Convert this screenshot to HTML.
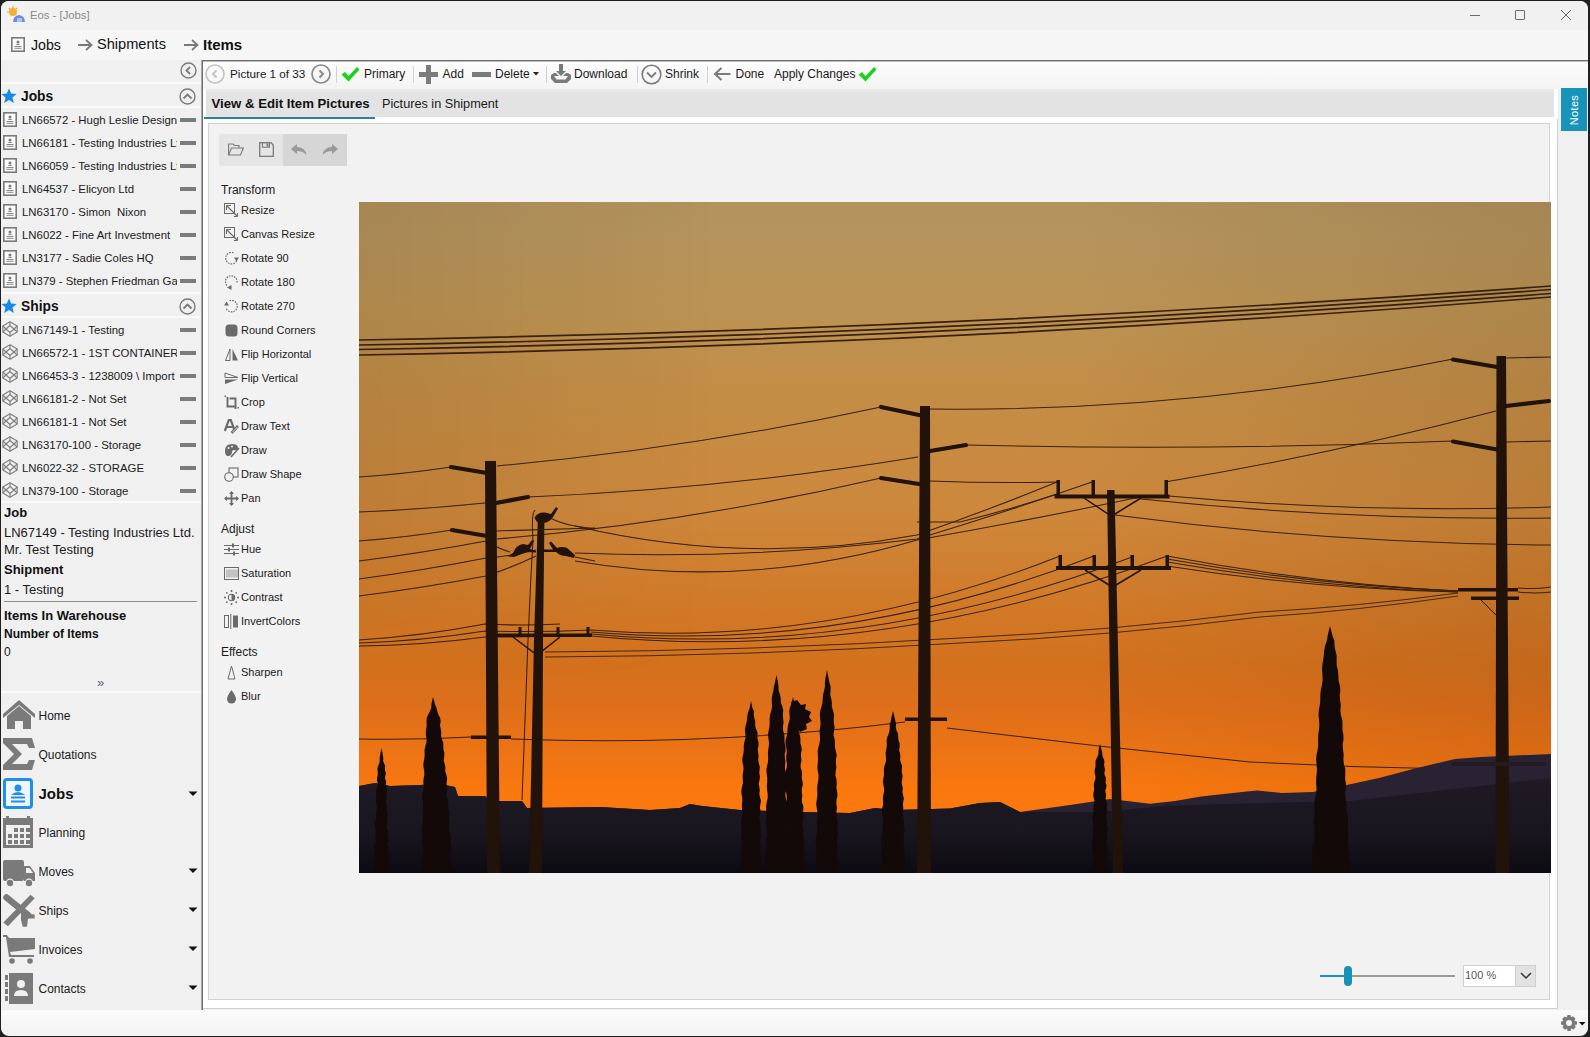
<!DOCTYPE html>
<html><head><meta charset="utf-8">
<style>
*{margin:0;padding:0;box-sizing:border-box}
html,body{width:1590px;height:1037px;overflow:hidden;background:#202020;font-family:"Liberation Sans",sans-serif;color:#111}
.a{position:absolute}
.t{position:absolute;white-space:nowrap;line-height:1}
svg{position:absolute;overflow:visible}
</style></head><body>
<div class="a" style="left:1px;top:1px;width:1587px;height:1035px;background:#f0f0f0;border-radius:8px;overflow:hidden"></div>

<div class="a" style="left:1px;top:1px;width:1587px;height:29px;background:#f1f1f1;border-radius:8px 8px 0 0"></div>
<svg style="left:7px;top:6px" width="20" height="18" viewBox="0 0 20 18">
<circle cx="6" cy="6" r="4" fill="#f0b030"/><g stroke="#f0a020" stroke-width="1.2"><line x1="6" y1="0" x2="6" y2="2"/><line x1="0" y1="6" x2="2" y2="6"/><line x1="1.8" y1="1.8" x2="3" y2="3"/><line x1="10.2" y1="1.8" x2="9" y2="3"/></g>
<path d="M6 16 Q6 10 12 9 Q18 10 18 16 Z" fill="#6d8fd0"/><rect x="10" y="12" width="5" height="4" fill="#a9c4f0"/>
</svg>
<div class="t" style="left:30px;top:9.57px;font-size:11.3px;font-weight:normal;color:#8a8a8a;">Eos - [Jobs]</div>
<div class="a" style="left:1470px;top:15px;width:10px;height:1px;background:#6a6a6a"></div>
<div class="a" style="left:1515px;top:10px;width:10px;height:10px;border:1px solid #6a6a6a;border-radius:1px"></div>
<svg style="left:1561px;top:10px" width="10" height="10" viewBox="0 0 10 10"><path d="M0 0 L10 10 M10 0 L0 10" stroke="#6a6a6a" stroke-width="1"/></svg>
<div class="a" style="left:1px;top:30px;width:1587px;height:30px;background:#f6f6f6"></div>
<svg style="left:11px;top:37px" width="14" height="15" viewBox="0 0 14 15">
<rect x="0.8" y="0.8" width="12.4" height="13.4" fill="#fbfbfb" stroke="#7a7a7a" stroke-width="1.6"/>
<circle cx="7" cy="5" r="1.5" fill="#7a7a7a"/><path d="M4.5 8 Q7 5.8 9.5 8 Z" fill="#7a7a7a"/>
<line x1="3.5" y1="9.5" x2="10.5" y2="9.5" stroke="#7a7a7a" stroke-width="0.9"/><line x1="3.5" y1="11.3" x2="10.5" y2="11.3" stroke="#7a7a7a" stroke-width="0.9"/>
</svg>
<div class="t" style="left:31px;top:37.75px;font-size:14.2px;font-weight:normal;color:#111;">Jobs</div>
<svg style="left:78px;top:39px" width="15" height="12" viewBox="0 0 15 12"><path d="M0 6 H13 M8 1 L13.5 6 L8 11" fill="none" stroke="#7a7a7a" stroke-width="1.8"/></svg>
<div class="t" style="left:97px;top:37.39px;font-size:14.6px;font-weight:normal;color:#111;">Shipments</div>
<svg style="left:184px;top:39px" width="15" height="12" viewBox="0 0 15 12"><path d="M0 6 H13 M8 1 L13.5 6 L8 11" fill="none" stroke="#7a7a7a" stroke-width="1.8"/></svg>
<div class="t" style="left:203px;top:37.02px;font-size:15px;font-weight:bold;color:#111;">Items</div>
<div class="a" style="left:1px;top:60px;width:200px;height:950px;background:#f0f0f0"></div>
<svg style="left:179.0px;top:60.5px" width="19.0" height="19.0"><circle cx="9.5" cy="9.5" r="7.5" fill="none" stroke="#7a7a7a" stroke-width="1.4"/><path d="M11.0 6.0 L7.5 9.5 L11.0 13.0" fill="none" stroke="#7a7a7a" stroke-width="1.7999999999999998"/></svg>
<div class="a" style="left:1px;top:82px;width:200px;height:2px;background:#fafafa"></div>
<div class="a" style="left:1px;top:106px;width:200px;height:2px;background:#fafafa"></div>
<svg style="left:1px;top:88px" width="16" height="16" viewBox="0 0 16 16"><path d="M8 0.5 L10.2 5.6 L15.6 6 L11.5 9.6 L12.8 15 L8 12.1 L3.2 15 L4.5 9.6 L0.4 6 L5.8 5.6 Z" fill="#1a88e6"/></svg>
<div class="t" style="left:21px;top:90.01px;font-size:13.8px;font-weight:bold;color:#111;">Jobs</div>
<svg style="left:178.0px;top:86.5px" width="19.0" height="19.0"><circle cx="9.5" cy="9.5" r="7.5" fill="none" stroke="#7a7a7a" stroke-width="1.4"/><path d="M5.5 11.5 L9.5 7.5 L13.5 11.5" fill="none" stroke="#7a7a7a" stroke-width="1.7999999999999998"/></svg>
<svg style="left:3px;top:112px" width="14" height="15" viewBox="0 0 14 15">
<rect x="0.8" y="0.8" width="12.4" height="13.4" fill="#fbfbfb" stroke="#7a7a7a" stroke-width="1.6"/>
<circle cx="7" cy="5" r="1.5" fill="#7a7a7a"/><path d="M4.5 8 Q7 5.8 9.5 8 Z" fill="#7a7a7a"/>
<line x1="3.5" y1="9.5" x2="10.5" y2="9.5" stroke="#7a7a7a" stroke-width="0.9"/><line x1="3.5" y1="11.3" x2="10.5" y2="11.3" stroke="#7a7a7a" stroke-width="0.9"/>
</svg>
<div class="t" style="left:22px;top:114.68px;width:155px;overflow:hidden;font-size:11.4px;color:#1a1a1a">LN66572 - Hugh Leslie Design</div>
<div class="a" style="left:180px;top:118px;width:16px;height:4px;background:#7b7b7b"></div>
<svg style="left:3px;top:135px" width="14" height="15" viewBox="0 0 14 15">
<rect x="0.8" y="0.8" width="12.4" height="13.4" fill="#fbfbfb" stroke="#7a7a7a" stroke-width="1.6"/>
<circle cx="7" cy="5" r="1.5" fill="#7a7a7a"/><path d="M4.5 8 Q7 5.8 9.5 8 Z" fill="#7a7a7a"/>
<line x1="3.5" y1="9.5" x2="10.5" y2="9.5" stroke="#7a7a7a" stroke-width="0.9"/><line x1="3.5" y1="11.3" x2="10.5" y2="11.3" stroke="#7a7a7a" stroke-width="0.9"/>
</svg>
<div class="t" style="left:22px;top:137.68px;width:155px;overflow:hidden;font-size:11.4px;color:#1a1a1a">LN66181 - Testing Industries Ltd</div>
<div class="a" style="left:180px;top:141px;width:16px;height:4px;background:#7b7b7b"></div>
<svg style="left:3px;top:158px" width="14" height="15" viewBox="0 0 14 15">
<rect x="0.8" y="0.8" width="12.4" height="13.4" fill="#fbfbfb" stroke="#7a7a7a" stroke-width="1.6"/>
<circle cx="7" cy="5" r="1.5" fill="#7a7a7a"/><path d="M4.5 8 Q7 5.8 9.5 8 Z" fill="#7a7a7a"/>
<line x1="3.5" y1="9.5" x2="10.5" y2="9.5" stroke="#7a7a7a" stroke-width="0.9"/><line x1="3.5" y1="11.3" x2="10.5" y2="11.3" stroke="#7a7a7a" stroke-width="0.9"/>
</svg>
<div class="t" style="left:22px;top:160.68px;width:155px;overflow:hidden;font-size:11.4px;color:#1a1a1a">LN66059 - Testing Industries Ltd</div>
<div class="a" style="left:180px;top:164px;width:16px;height:4px;background:#7b7b7b"></div>
<svg style="left:3px;top:181px" width="14" height="15" viewBox="0 0 14 15">
<rect x="0.8" y="0.8" width="12.4" height="13.4" fill="#fbfbfb" stroke="#7a7a7a" stroke-width="1.6"/>
<circle cx="7" cy="5" r="1.5" fill="#7a7a7a"/><path d="M4.5 8 Q7 5.8 9.5 8 Z" fill="#7a7a7a"/>
<line x1="3.5" y1="9.5" x2="10.5" y2="9.5" stroke="#7a7a7a" stroke-width="0.9"/><line x1="3.5" y1="11.3" x2="10.5" y2="11.3" stroke="#7a7a7a" stroke-width="0.9"/>
</svg>
<div class="t" style="left:22px;top:183.68px;width:155px;overflow:hidden;font-size:11.4px;color:#1a1a1a">LN64537 - Elicyon Ltd</div>
<div class="a" style="left:180px;top:187px;width:16px;height:4px;background:#7b7b7b"></div>
<svg style="left:3px;top:204px" width="14" height="15" viewBox="0 0 14 15">
<rect x="0.8" y="0.8" width="12.4" height="13.4" fill="#fbfbfb" stroke="#7a7a7a" stroke-width="1.6"/>
<circle cx="7" cy="5" r="1.5" fill="#7a7a7a"/><path d="M4.5 8 Q7 5.8 9.5 8 Z" fill="#7a7a7a"/>
<line x1="3.5" y1="9.5" x2="10.5" y2="9.5" stroke="#7a7a7a" stroke-width="0.9"/><line x1="3.5" y1="11.3" x2="10.5" y2="11.3" stroke="#7a7a7a" stroke-width="0.9"/>
</svg>
<div class="t" style="left:22px;top:206.68px;width:155px;overflow:hidden;font-size:11.4px;color:#1a1a1a">LN63170 - Simon&nbsp; Nixon</div>
<div class="a" style="left:180px;top:210px;width:16px;height:4px;background:#7b7b7b"></div>
<svg style="left:3px;top:227px" width="14" height="15" viewBox="0 0 14 15">
<rect x="0.8" y="0.8" width="12.4" height="13.4" fill="#fbfbfb" stroke="#7a7a7a" stroke-width="1.6"/>
<circle cx="7" cy="5" r="1.5" fill="#7a7a7a"/><path d="M4.5 8 Q7 5.8 9.5 8 Z" fill="#7a7a7a"/>
<line x1="3.5" y1="9.5" x2="10.5" y2="9.5" stroke="#7a7a7a" stroke-width="0.9"/><line x1="3.5" y1="11.3" x2="10.5" y2="11.3" stroke="#7a7a7a" stroke-width="0.9"/>
</svg>
<div class="t" style="left:22px;top:229.68px;width:155px;overflow:hidden;font-size:11.4px;color:#1a1a1a">LN6022 - Fine Art Investment</div>
<div class="a" style="left:180px;top:233px;width:16px;height:4px;background:#7b7b7b"></div>
<svg style="left:3px;top:250px" width="14" height="15" viewBox="0 0 14 15">
<rect x="0.8" y="0.8" width="12.4" height="13.4" fill="#fbfbfb" stroke="#7a7a7a" stroke-width="1.6"/>
<circle cx="7" cy="5" r="1.5" fill="#7a7a7a"/><path d="M4.5 8 Q7 5.8 9.5 8 Z" fill="#7a7a7a"/>
<line x1="3.5" y1="9.5" x2="10.5" y2="9.5" stroke="#7a7a7a" stroke-width="0.9"/><line x1="3.5" y1="11.3" x2="10.5" y2="11.3" stroke="#7a7a7a" stroke-width="0.9"/>
</svg>
<div class="t" style="left:22px;top:252.68px;width:155px;overflow:hidden;font-size:11.4px;color:#1a1a1a">LN3177 - Sadie Coles HQ</div>
<div class="a" style="left:180px;top:256px;width:16px;height:4px;background:#7b7b7b"></div>
<svg style="left:3px;top:273px" width="14" height="15" viewBox="0 0 14 15">
<rect x="0.8" y="0.8" width="12.4" height="13.4" fill="#fbfbfb" stroke="#7a7a7a" stroke-width="1.6"/>
<circle cx="7" cy="5" r="1.5" fill="#7a7a7a"/><path d="M4.5 8 Q7 5.8 9.5 8 Z" fill="#7a7a7a"/>
<line x1="3.5" y1="9.5" x2="10.5" y2="9.5" stroke="#7a7a7a" stroke-width="0.9"/><line x1="3.5" y1="11.3" x2="10.5" y2="11.3" stroke="#7a7a7a" stroke-width="0.9"/>
</svg>
<div class="t" style="left:22px;top:275.68px;width:155px;overflow:hidden;font-size:11.4px;color:#1a1a1a">LN379 - Stephen Friedman Gallery</div>
<div class="a" style="left:180px;top:279px;width:16px;height:4px;background:#7b7b7b"></div>
<div class="a" style="left:1px;top:292px;width:200px;height:2px;background:#fafafa"></div>
<div class="a" style="left:1px;top:316px;width:200px;height:2px;background:#fafafa"></div>
<svg style="left:1px;top:298px" width="16" height="16" viewBox="0 0 16 16"><path d="M8 0.5 L10.2 5.6 L15.6 6 L11.5 9.6 L12.8 15 L8 12.1 L3.2 15 L4.5 9.6 L0.4 6 L5.8 5.6 Z" fill="#1a88e6"/></svg>
<div class="t" style="left:21px;top:300.01px;font-size:13.8px;font-weight:bold;color:#111;">Ships</div>
<svg style="left:178.0px;top:296.5px" width="19.0" height="19.0"><circle cx="9.5" cy="9.5" r="7.5" fill="none" stroke="#7a7a7a" stroke-width="1.4"/><path d="M5.5 11.5 L9.5 7.5 L13.5 11.5" fill="none" stroke="#7a7a7a" stroke-width="1.7999999999999998"/></svg>
<svg style="left:2px;top:321px" width="16" height="16" viewBox="0 0 16 16"><g fill="none" stroke="#7d7d7d" stroke-width="1.1" stroke-linejoin="round"><path d="M8 0.8 L15.2 5 L15.2 11 L8 15.2 L0.8 11 L0.8 5 Z"/><path d="M8 4.5 L12 8 L8 11.5 L4 8 Z"/><path d="M8 0.8 V4.5 M8 11.5 V15.2 M0.8 5 L4 8 L0.8 11 M15.2 5 L12 8 L15.2 11"/></g></svg>
<div class="t" style="left:22px;top:324.68px;width:155px;overflow:hidden;font-size:11.4px;color:#1a1a1a">LN67149-1 - Testing</div>
<div class="a" style="left:180px;top:328px;width:16px;height:4px;background:#7b7b7b"></div>
<svg style="left:2px;top:344px" width="16" height="16" viewBox="0 0 16 16"><g fill="none" stroke="#7d7d7d" stroke-width="1.1" stroke-linejoin="round"><path d="M8 0.8 L15.2 5 L15.2 11 L8 15.2 L0.8 11 L0.8 5 Z"/><path d="M8 4.5 L12 8 L8 11.5 L4 8 Z"/><path d="M8 0.8 V4.5 M8 11.5 V15.2 M0.8 5 L4 8 L0.8 11 M15.2 5 L12 8 L15.2 11"/></g></svg>
<div class="t" style="left:22px;top:347.68px;width:155px;overflow:hidden;font-size:11.4px;color:#1a1a1a">LN66572-1 - 1ST CONTAINER</div>
<div class="a" style="left:180px;top:351px;width:16px;height:4px;background:#7b7b7b"></div>
<svg style="left:2px;top:367px" width="16" height="16" viewBox="0 0 16 16"><g fill="none" stroke="#7d7d7d" stroke-width="1.1" stroke-linejoin="round"><path d="M8 0.8 L15.2 5 L15.2 11 L8 15.2 L0.8 11 L0.8 5 Z"/><path d="M8 4.5 L12 8 L8 11.5 L4 8 Z"/><path d="M8 0.8 V4.5 M8 11.5 V15.2 M0.8 5 L4 8 L0.8 11 M15.2 5 L12 8 L15.2 11"/></g></svg>
<div class="t" style="left:22px;top:370.68px;width:155px;overflow:hidden;font-size:11.4px;color:#1a1a1a">LN66453-3 - 1238009 \ Import</div>
<div class="a" style="left:180px;top:374px;width:16px;height:4px;background:#7b7b7b"></div>
<svg style="left:2px;top:390px" width="16" height="16" viewBox="0 0 16 16"><g fill="none" stroke="#7d7d7d" stroke-width="1.1" stroke-linejoin="round"><path d="M8 0.8 L15.2 5 L15.2 11 L8 15.2 L0.8 11 L0.8 5 Z"/><path d="M8 4.5 L12 8 L8 11.5 L4 8 Z"/><path d="M8 0.8 V4.5 M8 11.5 V15.2 M0.8 5 L4 8 L0.8 11 M15.2 5 L12 8 L15.2 11"/></g></svg>
<div class="t" style="left:22px;top:393.68px;width:155px;overflow:hidden;font-size:11.4px;color:#1a1a1a">LN66181-2 - Not Set</div>
<div class="a" style="left:180px;top:397px;width:16px;height:4px;background:#7b7b7b"></div>
<svg style="left:2px;top:413px" width="16" height="16" viewBox="0 0 16 16"><g fill="none" stroke="#7d7d7d" stroke-width="1.1" stroke-linejoin="round"><path d="M8 0.8 L15.2 5 L15.2 11 L8 15.2 L0.8 11 L0.8 5 Z"/><path d="M8 4.5 L12 8 L8 11.5 L4 8 Z"/><path d="M8 0.8 V4.5 M8 11.5 V15.2 M0.8 5 L4 8 L0.8 11 M15.2 5 L12 8 L15.2 11"/></g></svg>
<div class="t" style="left:22px;top:416.68px;width:155px;overflow:hidden;font-size:11.4px;color:#1a1a1a">LN66181-1 - Not Set</div>
<div class="a" style="left:180px;top:420px;width:16px;height:4px;background:#7b7b7b"></div>
<svg style="left:2px;top:436px" width="16" height="16" viewBox="0 0 16 16"><g fill="none" stroke="#7d7d7d" stroke-width="1.1" stroke-linejoin="round"><path d="M8 0.8 L15.2 5 L15.2 11 L8 15.2 L0.8 11 L0.8 5 Z"/><path d="M8 4.5 L12 8 L8 11.5 L4 8 Z"/><path d="M8 0.8 V4.5 M8 11.5 V15.2 M0.8 5 L4 8 L0.8 11 M15.2 5 L12 8 L15.2 11"/></g></svg>
<div class="t" style="left:22px;top:439.68px;width:155px;overflow:hidden;font-size:11.4px;color:#1a1a1a">LN63170-100 - Storage</div>
<div class="a" style="left:180px;top:443px;width:16px;height:4px;background:#7b7b7b"></div>
<svg style="left:2px;top:459px" width="16" height="16" viewBox="0 0 16 16"><g fill="none" stroke="#7d7d7d" stroke-width="1.1" stroke-linejoin="round"><path d="M8 0.8 L15.2 5 L15.2 11 L8 15.2 L0.8 11 L0.8 5 Z"/><path d="M8 4.5 L12 8 L8 11.5 L4 8 Z"/><path d="M8 0.8 V4.5 M8 11.5 V15.2 M0.8 5 L4 8 L0.8 11 M15.2 5 L12 8 L15.2 11"/></g></svg>
<div class="t" style="left:22px;top:462.68px;width:155px;overflow:hidden;font-size:11.4px;color:#1a1a1a">LN6022-32 - STORAGE</div>
<div class="a" style="left:180px;top:466px;width:16px;height:4px;background:#7b7b7b"></div>
<svg style="left:2px;top:482px" width="16" height="16" viewBox="0 0 16 16"><g fill="none" stroke="#7d7d7d" stroke-width="1.1" stroke-linejoin="round"><path d="M8 0.8 L15.2 5 L15.2 11 L8 15.2 L0.8 11 L0.8 5 Z"/><path d="M8 4.5 L12 8 L8 11.5 L4 8 Z"/><path d="M8 0.8 V4.5 M8 11.5 V15.2 M0.8 5 L4 8 L0.8 11 M15.2 5 L12 8 L15.2 11"/></g></svg>
<div class="t" style="left:22px;top:485.68px;width:155px;overflow:hidden;font-size:11.4px;color:#1a1a1a">LN379-100 - Storage</div>
<div class="a" style="left:180px;top:489px;width:16px;height:4px;background:#7b7b7b"></div>
<div class="a" style="left:1px;top:501px;width:200px;height:2px;background:#fafafa"></div>
<div class="t" style="left:4px;top:505.74px;font-size:13px;font-weight:bold;color:#111;">Job</div>
<div class="t" style="left:4px;top:526.24px;font-size:13px;font-weight:normal;color:#1a1a1a;">LN67149 - Testing Industries Ltd.</div>
<div class="t" style="left:4px;top:543.24px;font-size:13px;font-weight:normal;color:#1a1a1a;">Mr. Test Testing</div>
<div class="t" style="left:4px;top:563.24px;font-size:13px;font-weight:bold;color:#111;">Shipment</div>
<div class="t" style="left:4px;top:583.24px;font-size:13px;font-weight:normal;color:#1a1a1a;">1 - Testing</div>
<div class="a" style="left:4px;top:601px;width:193px;height:1px;background:#8c8c8c"></div>
<div class="t" style="left:4px;top:609.24px;font-size:13px;font-weight:bold;color:#111;">Items In Warehouse</div>
<div class="t" style="left:4px;top:628.14px;font-size:12px;font-weight:bold;color:#111;">Number of Items</div>
<div class="t" style="left:4px;top:645.64px;font-size:12px;font-weight:normal;color:#1a1a1a;">0</div>
<div class="t" style="left:97px;top:676.24px;font-size:13px;font-weight:normal;color:#5a5a7a;">&raquo;</div>
<div class="a" style="left:1px;top:691px;width:200px;height:2px;background:#fafafa"></div>
<svg style="left:3px;top:699px" width="32" height="32" viewBox="0 0 32 32"><path d="M0 15 L16 1 L32 15 L32 19 L16 6 L0 19 Z" fill="#7a7a7a"/><path d="M4 17 L16 7 L28 17 L28 30 L20 30 L20 22 L12 22 L12 30 L4 30 Z" fill="#7a7a7a"/></svg>
<div class="t" style="left:38.5px;top:710.14px;font-size:12px;font-weight:normal;color:#1a1a1a;">Home</div>
<svg style="left:3px;top:738px" width="32" height="32" viewBox="0 0 32 32"><path d="M0 0 H29 L32 10 H26 L24 6 H9 L19 16 L9 26 H24 L26 22 H32 L29 32 H0 V27 L11 16 L0 5 Z" fill="#7a7a7a"/></svg>
<div class="t" style="left:38.5px;top:749.14px;font-size:12px;font-weight:normal;color:#1a1a1a;">Quotations</div>
<svg style="left:3px;top:778px" width="32" height="32" viewBox="0 0 32 32"><rect x="1.5" y="1.5" width="27" height="28" rx="2.5" fill="#eef6fd" stroke="#1e8ee8" stroke-width="3"/><circle cx="15" cy="10" r="3.5" fill="#1e8ee8"/><path d="M8 17 Q15 11 22 17 Z" fill="#1e8ee8"/><rect x="8" y="18.5" width="14" height="2" fill="#1e8ee8"/><rect x="8" y="22.5" width="14" height="2" fill="#1e8ee8"/></svg>
<div class="t" style="left:38.5px;top:786.02px;font-size:15px;font-weight:bold;color:#111;">Jobs</div>
<svg style="left:188px;top:791px" width="10" height="6"><path d="M0.5 0.5 H9.5 L5 5 Z" fill="#111"/></svg>
<svg style="left:3px;top:816px" width="32" height="32" viewBox="0 0 32 32"><path d="M0 2 H30 V32 H0 Z M3 9 V29 H27 V9 Z" fill="#7a7a7a"/><rect x="3" y="0" width="3" height="4" fill="#7a7a7a"/><rect x="24" y="0" width="3" height="4" fill="#7a7a7a"/><rect x="11" y="12" width="4" height="4" fill="#7a7a7a"/><rect x="17" y="12" width="4" height="4" fill="#7a7a7a"/><rect x="23" y="12" width="4" height="4" fill="#7a7a7a"/><rect x="5" y="18" width="4" height="4" fill="#7a7a7a"/><rect x="11" y="18" width="4" height="4" fill="#7a7a7a"/><rect x="17" y="18" width="4" height="4" fill="#7a7a7a"/><rect x="23" y="18" width="4" height="4" fill="#7a7a7a"/><rect x="5" y="24" width="4" height="4" fill="#7a7a7a"/><rect x="11" y="24" width="4" height="4" fill="#7a7a7a"/><rect x="17" y="24" width="4" height="4" fill="#7a7a7a"/><rect x="23" y="24" width="4" height="4" fill="#7a7a7a"/></svg>
<div class="t" style="left:38.5px;top:827.14px;font-size:12px;font-weight:normal;color:#1a1a1a;">Planning</div>
<svg style="left:3px;top:855px" width="32" height="32" viewBox="0 0 32 32"><rect x="0" y="5" width="21" height="21" rx="2" fill="#7a7a7a"/><path d="M21 11 H27 L32 18 V26 H21 Z" fill="#7a7a7a"/><path d="M23 13 H26.5 L30 18 H23 Z" fill="#f0f0f0"/><circle cx="7" cy="28" r="3.8" fill="#7a7a7a" stroke="#f0f0f0" stroke-width="1.2"/><circle cx="26" cy="28" r="3.8" fill="#7a7a7a" stroke="#f0f0f0" stroke-width="1.2"/></svg>
<div class="t" style="left:38.5px;top:866.14px;font-size:12px;font-weight:normal;color:#1a1a1a;">Moves</div>
<svg style="left:188px;top:868px" width="10" height="6"><path d="M0.5 0.5 H9.5 L5 5 Z" fill="#111"/></svg>
<svg style="left:3px;top:894px" width="32" height="32" viewBox="0 0 32 32"><path d="M3.5 3.5 L25 21" stroke="#7a7a7a" stroke-width="6.5" stroke-linecap="round"/><path d="M27.5 0.8 L31.7 4.2 L5 32.3 L0.3 28.6 Z" fill="#7a7a7a"/><path d="M18 19 L31.7 20.5 L31.7 24.6 L25 24.5 L24 32.7 L19.8 32.7 L18 26 Z" fill="#7a7a7a"/></svg>
<div class="t" style="left:38.5px;top:905.14px;font-size:12px;font-weight:normal;color:#1a1a1a;">Ships</div>
<svg style="left:188px;top:907px" width="10" height="6"><path d="M0.5 0.5 H9.5 L5 5 Z" fill="#111"/></svg>
<svg style="left:3px;top:933px" width="32" height="32" viewBox="0 0 32 32"><path d="M0 2 H4 L6 5 H32 V16 L7 19 L8 22 H31 V24 H6 L3 4 H0 Z" fill="#7a7a7a"/><circle cx="9" cy="28" r="2.8" fill="#7a7a7a"/><circle cx="27" cy="28" r="2.8" fill="#7a7a7a"/></svg>
<div class="t" style="left:38.5px;top:944.14px;font-size:12px;font-weight:normal;color:#1a1a1a;">Invoices</div>
<svg style="left:188px;top:946px" width="10" height="6"><path d="M0.5 0.5 H9.5 L5 5 Z" fill="#111"/></svg>
<svg style="left:3px;top:972px" width="32" height="32" viewBox="0 0 32 32"><rect x="6" y="1" width="24" height="31" fill="#7a7a7a"/><rect x="2" y="3" width="3" height="5" fill="#7a7a7a"/><rect x="2" y="10" width="3" height="5" fill="#7a7a7a"/><rect x="2" y="17" width="3" height="5" fill="#7a7a7a"/><rect x="2" y="24" width="3" height="5" fill="#7a7a7a"/><circle cx="18" cy="12" r="4" fill="#f0f0f0"/><path d="M11 24 Q11 18 18 18 Q25 18 25 24 Z" fill="#f0f0f0"/></svg>
<div class="t" style="left:38.5px;top:983.14px;font-size:12px;font-weight:normal;color:#1a1a1a;">Contacts</div>
<svg style="left:188px;top:985px" width="10" height="6"><path d="M0.5 0.5 H9.5 L5 5 Z" fill="#111"/></svg>
<div class="a" style="left:201px;top:60px;width:1387px;height:950px;background:#f0f0f0"></div>
<div class="a" style="left:201px;top:60px;width:1387px;height:1px;background:#6e6e6e"></div>
<div class="a" style="left:201px;top:61px;width:1387px;height:1px;background:#bdbdbd"></div>
<div class="a" style="left:201px;top:60px;width:1px;height:950px;background:#a8a8a8"></div>
<div class="a" style="left:202px;top:60px;width:1px;height:950px;background:#6e6e6e"></div>
<div class="a" style="left:203px;top:62px;width:1385px;height:27px;background:linear-gradient(#fdfdfd,#f3f3f3)"></div>
<div class="a" style="left:203px;top:89px;width:1355px;height:30px;background:#fff"></div>
<div class="a" style="left:206px;top:89px;width:1348px;height:28px;background:linear-gradient(#e9e9e9,#e3e3e3 20%,#e3e3e3)"></div>
<div class="a" style="left:204px;top:117px;width:171px;height:2px;background:#2f8296"></div>
<div class="t" style="left:211.5px;top:97.35px;font-size:13.2px;font-weight:bold;color:#111;">View &amp; Edit Item Pictures</div>
<div class="t" style="left:382px;top:98.11px;font-size:12.7px;font-weight:normal;color:#1a1a1a;">Pictures in Shipment</div>
<div class="a" style="left:203px;top:119px;width:1355px;height:890px;background:#fff;border-right:1px solid #cfcfcf;border-bottom:1px solid #cfcfcf"></div>
<div class="a" style="left:208px;top:123px;width:1342px;height:877px;background:#f2f2f2;border:1px solid #d2d2d2"></div>
<div class="a" style="left:1558px;top:89px;width:30px;height:921px;background:#f0f0f0"></div>
<div class="a" style="left:1561px;top:88px;width:26px;height:43px;background:#1793b9"></div>
<div class="t" style="left:1574px;top:109.5px;font-size:11px;color:#fff;transform:translate(-50%,-50%) rotate(-90deg);letter-spacing:0.3px">Notes</div>
<svg style="left:203.5px;top:62.5px" width="22" height="22"><circle cx="11" cy="11" r="9" fill="none" stroke="#c4c4c4" stroke-width="1.7"/><path d="M12.5 7.5 L9 11 L12.5 14.5" fill="none" stroke="#c4c4c4" stroke-width="2.1"/></svg>
<div class="t" style="left:230px;top:68.41px;font-size:11.7px;font-weight:normal;color:#1a1a1a;">Picture 1 of 33</div>
<svg style="left:309.5px;top:62.5px" width="22" height="22"><circle cx="11" cy="11" r="9" fill="none" stroke="#8a8a8a" stroke-width="1.7"/><path d="M9.5 7.5 L13 11 L9.5 14.5" fill="none" stroke="#8a8a8a" stroke-width="2.1"/></svg>
<div class="a" style="left:336px;top:66px;width:1px;height:17px;background:#d0d0d0"></div>
<svg style="left:341px;top:66px" width="19" height="16" viewBox="0 0 19 16"><path d="M0.5 8.5 L4 6 L7.5 10 L16 1 L18.5 3.5 L7.5 15.5 Z" fill="#1fd11f"/></svg>
<div class="t" style="left:364px;top:68.14px;font-size:12px;font-weight:normal;color:#1a1a1a;">Primary</div>
<div class="a" style="left:413px;top:66px;width:1px;height:17px;background:#d0d0d0"></div>
<div class="a" style="left:419px;top:71.5px;width:19px;height:5px;background:#7b7b7b"></div>
<div class="a" style="left:426px;top:64.5px;width:5px;height:19px;background:#7b7b7b"></div>
<div class="t" style="left:442.5px;top:68.14px;font-size:12px;font-weight:normal;color:#1a1a1a;">Add</div>
<div class="a" style="left:472px;top:71.5px;width:19px;height:5px;background:#7b7b7b"></div>
<div class="t" style="left:495px;top:68.14px;font-size:12px;font-weight:normal;color:#1a1a1a;">Delete</div>
<svg style="left:533px;top:72px" width="7" height="4"><path d="M0 0 H6 L3 3.5 Z" fill="#222"/></svg>
<div class="a" style="left:546px;top:66px;width:1px;height:17px;background:#d0d0d0"></div>
<svg style="left:551px;top:64px" width="21" height="20" viewBox="0 0 21 20"><path d="M8 0 H12 V7 H15 L10 12 L5 7 H8 Z" fill="#7a7a7a"/><path d="M0 11 L3 9 H5 L10 14 L15 9 H17 L20 11 V15 L16 19 H4 L0 15 Z" fill="#7a7a7a"/><path d="M3 12 H17 L14.5 15.5 H5.5 Z" fill="#f5f5f5"/></svg>
<div class="t" style="left:574px;top:68.14px;font-size:12px;font-weight:normal;color:#1a1a1a;">Download</div>
<div class="a" style="left:637px;top:66px;width:1px;height:17px;background:#d0d0d0"></div>
<svg style="left:641px;top:64px" width="21" height="21" viewBox="0 0 21 21"><circle cx="10.5" cy="10.5" r="9.3" fill="none" stroke="#7a7a7a" stroke-width="1.6"/><path d="M6 8.5 L10.5 13 L15 8.5" fill="none" stroke="#7a7a7a" stroke-width="1.8"/></svg>
<div class="t" style="left:665px;top:68.14px;font-size:12px;font-weight:normal;color:#1a1a1a;">Shrink</div>
<div class="a" style="left:707px;top:66px;width:1px;height:17px;background:#d0d0d0"></div>
<svg style="left:713px;top:66px" width="18" height="16" viewBox="0 0 18 16"><path d="M17.5 8 H3 M8.5 2 L2 8 L8.5 14" fill="none" stroke="#7a7a7a" stroke-width="2"/></svg>
<div class="t" style="left:735.5px;top:68.14px;font-size:12px;font-weight:normal;color:#1a1a1a;">Done</div>
<div class="t" style="left:774px;top:68.14px;font-size:12px;font-weight:normal;color:#1a1a1a;">Apply Changes</div>
<svg style="left:858px;top:65.5px" width="19" height="16" viewBox="0 0 19 16"><path d="M0.5 8.5 L4 6 L7.5 10 L16 1 L18.5 3.5 L7.5 15.5 Z" fill="#1fd11f"/></svg>
<div class="a" style="left:219px;top:134px;width:64px;height:32px;background:#e5e5e5"></div>
<div class="a" style="left:283px;top:134px;width:64px;height:32px;background:#d6d6d6"></div>
<svg style="left:228px;top:143px" width="16" height="13" viewBox="0 0 16 13"><path d="M0.6 12 V1 H5 L6.5 2.5 H11 V5" fill="none" stroke="#7a7a7a" stroke-width="1.1"/><path d="M0.6 12 L3.5 5 H15.3 L12.5 12 Z" fill="none" stroke="#7a7a7a" stroke-width="1.1"/></svg>
<svg style="left:259px;top:142px" width="15" height="15" viewBox="0 0 15 15"><path d="M0.7 0.7 H12 L14.3 3 V14.3 H0.7 Z" fill="none" stroke="#7a7a7a" stroke-width="1.3"/><rect x="3.5" y="0.7" width="7" height="4.5" fill="none" stroke="#7a7a7a" stroke-width="1.1"/><rect x="7.5" y="1.5" width="2" height="3" fill="#7a7a7a"/></svg>
<svg style="left:291px;top:144px" width="16" height="12" viewBox="0 0 16 12"><path d="M0 5 L6 0 V3 Q14 3 15.5 11 Q12 7 6 7 V10 Z" fill="#9a9a9a"/></svg>
<svg style="left:322px;top:144px" width="16" height="12" viewBox="0 0 16 12"><path d="M16 5 L10 0 V3 Q2 3 0.5 11 Q4 7 10 7 V10 Z" fill="#9a9a9a"/></svg>
<div class="t" style="left:221px;top:183.64px;font-size:12px;font-weight:normal;color:#1a1a1a;">Transform</div>
<svg style="left:224px;top:203px" width="15" height="15" viewBox="0 0 15 15"><rect x="0.5" y="0.5" width="10" height="10" fill="none" stroke="#6a6a6a" stroke-width="1"/><path d="M2.5 2.5 L13.5 13.5 M2.5 2.5 H7 M2.5 2.5 V7 M13.5 13.5 H10 M13.5 13.5 V10" fill="none" stroke="#6a6a6a" stroke-width="1.1"/></svg>
<div class="t" style="left:241px;top:205.04px;font-size:11px;font-weight:normal;color:#1a1a1a;">Resize</div>
<svg style="left:224px;top:227px" width="15" height="15" viewBox="0 0 15 15"><rect x="0.5" y="0.5" width="10" height="10" fill="none" stroke="#6a6a6a" stroke-width="1"/><path d="M2.5 2.5 L13.5 13.5 M2.5 2.5 H7 M2.5 2.5 V7 M13.5 13.5 H10 M13.5 13.5 V10" fill="none" stroke="#6a6a6a" stroke-width="1.1"/></svg>
<div class="t" style="left:241px;top:229.04px;font-size:11px;font-weight:normal;color:#1a1a1a;">Canvas Resize</div>
<svg style="left:224px;top:251px" width="15" height="15" viewBox="0 0 15 15"><path d="M9.5 1.7 A5.8 5.8 0 1 0 12.8 9.5" fill="none" stroke="#6a6a6a" stroke-width="1.2" stroke-dasharray="1.6 1.1"/><path d="M10 6.5 H15 L12.5 10.5 Z" fill="#6a6a6a"/></svg>
<div class="t" style="left:241px;top:253.04px;font-size:11px;font-weight:normal;color:#1a1a1a;">Rotate 90</div>
<svg style="left:224px;top:275px" width="15" height="15" viewBox="0 0 15 15"><path d="M13 7.5 A5.8 5.8 0 1 0 3 10.5" fill="none" stroke="#6a6a6a" stroke-width="1.2" stroke-dasharray="1.6 1.1"/><path d="M7.5 10 V15 L3 12.5 Z" fill="#6a6a6a"/></svg>
<div class="t" style="left:241px;top:277.05px;font-size:11px;font-weight:normal;color:#1a1a1a;">Rotate 180</div>
<svg style="left:224px;top:299px" width="15" height="15" viewBox="0 0 15 15"><path d="M5.5 1.7 A5.8 5.8 0 1 1 2.2 9.5" fill="none" stroke="#6a6a6a" stroke-width="1.2" stroke-dasharray="1.6 1.1"/><path d="M0 6.5 H5 L2.5 2.5 Z" fill="#6a6a6a"/></svg>
<div class="t" style="left:241px;top:301.05px;font-size:11px;font-weight:normal;color:#1a1a1a;">Rotate 270</div>
<svg style="left:224px;top:323px" width="15" height="15" viewBox="0 0 15 15"><rect x="1.5" y="1.5" width="12" height="12" rx="3.5" fill="#6a6a6a"/></svg>
<div class="t" style="left:241px;top:325.05px;font-size:11px;font-weight:normal;color:#1a1a1a;">Round Corners</div>
<svg style="left:224px;top:347px" width="15" height="15" viewBox="0 0 15 15"><path d="M6 2 V13.5 H1.5 Z" fill="none" stroke="#6a6a6a" stroke-width="1"/><path d="M8.5 2 V13.5 H14 Z" fill="#6a6a6a"/></svg>
<div class="t" style="left:241px;top:349.05px;font-size:11px;font-weight:normal;color:#1a1a1a;">Flip Horizontal</div>
<svg style="left:224px;top:371px" width="15" height="15" viewBox="0 0 15 15"><path d="M1 2 L14 6.5 H1 Z" fill="none" stroke="#6a6a6a" stroke-width="1"/><path d="M1 8.5 H14 L1 13 Z" fill="#6a6a6a"/></svg>
<div class="t" style="left:241px;top:373.05px;font-size:11px;font-weight:normal;color:#1a1a1a;">Flip Vertical</div>
<svg style="left:224px;top:395px" width="15" height="15" viewBox="0 0 15 15"><path d="M3.5 2 V11.5 H11.5 M5.5 3.5 H11.5 V14" fill="none" stroke="#6a6a6a" stroke-width="1.9"/><rect x="0.5" y="0.5" width="1.5" height="1.5" fill="#6a6a6a"/><rect x="13.5" y="12" width="1.5" height="1.5" fill="#6a6a6a"/></svg>
<div class="t" style="left:241px;top:397.05px;font-size:11px;font-weight:normal;color:#1a1a1a;">Crop</div>
<svg style="left:224px;top:419px" width="15" height="15" viewBox="0 0 15 15"><path d="M0.8 12 L4.8 1 H6.8 L10.8 12 M2.8 8 H8.8" fill="none" stroke="#6a6a6a" stroke-width="2.2"/><path d="M7.5 14 L14 7" stroke="#6a6a6a" stroke-width="2.6"/><path d="M8 13.5 L13.5 8" stroke="#f2f2f2" stroke-width="0.8"/></svg>
<div class="t" style="left:241px;top:421.05px;font-size:11px;font-weight:normal;color:#1a1a1a;">Draw Text</div>
<svg style="left:224px;top:443px" width="15" height="15" viewBox="0 0 15 15"><path d="M1 8 Q1 1 8 1 Q14 1 14 5 Q14 8 10 7 Q8 7 8 9 Q8 13 4 13 Q1 13 1 8 Z" fill="#6a6a6a"/><circle cx="4.5" cy="5" r="1" fill="#f2f2f2"/><circle cx="8" cy="3.5" r="1" fill="#f2f2f2"/><path d="M7 14 L15 5" stroke="#6a6a6a" stroke-width="1.5"/></svg>
<div class="t" style="left:241px;top:445.05px;font-size:11px;font-weight:normal;color:#1a1a1a;">Draw</div>
<svg style="left:224px;top:467px" width="15" height="15" viewBox="0 0 15 15"><rect x="5" y="1" width="9" height="9" fill="none" stroke="#6a6a6a" stroke-width="1.1"/><circle cx="5" cy="10" r="4.3" fill="#f2f2f2" stroke="#6a6a6a" stroke-width="1.1"/></svg>
<div class="t" style="left:241px;top:469.05px;font-size:11px;font-weight:normal;color:#1a1a1a;">Draw Shape</div>
<svg style="left:224px;top:491px" width="15" height="15" viewBox="0 0 15 15"><path d="M7.5 1 V14 M1 7.5 H14" stroke="#6a6a6a" stroke-width="1.8"/><path d="M5 3 L7.5 0 L10 3 Z M5 12 L7.5 15 L10 12 Z M3 5 L0 7.5 L3 10 Z M12 5 L15 7.5 L12 10 Z" fill="#6a6a6a"/></svg>
<div class="t" style="left:241px;top:493.05px;font-size:11px;font-weight:normal;color:#1a1a1a;">Pan</div>
<div class="t" style="left:221px;top:522.64px;font-size:12px;font-weight:normal;color:#1a1a1a;">Adjust</div>
<svg style="left:224px;top:542px" width="15" height="15" viewBox="0 0 15 15"><path d="M0 3.5 H15 M0 7.5 H15 M0 11.5 H15" stroke="#6a6a6a" stroke-width="1"/><rect x="8" y="1.5" width="2" height="4" fill="#6a6a6a"/><rect x="4" y="5.5" width="2" height="4" fill="#6a6a6a"/><rect x="9" y="9.5" width="2" height="4" fill="#6a6a6a"/></svg>
<div class="t" style="left:241px;top:544.04px;font-size:11px;font-weight:normal;color:#1a1a1a;">Hue</div>
<svg style="left:224px;top:566px" width="15" height="15" viewBox="0 0 15 15"><rect x="0.5" y="1.5" width="14" height="12" fill="none" stroke="#6a6a6a" stroke-width="1"/><path d="M3 3.5 V11.5 M5 3.5 V11.5 M7 3.5 V11.5 M9 3.5 V11.5 M11 3.5 V11.5 M13 3.5 V11.5" stroke="#6a6a6a" stroke-width="0.7"/></svg>
<div class="t" style="left:241px;top:568.04px;font-size:11px;font-weight:normal;color:#1a1a1a;">Saturation</div>
<svg style="left:224px;top:590px" width="15" height="15" viewBox="0 0 15 15"><circle cx="7.5" cy="7.5" r="3.2" fill="none" stroke="#6a6a6a" stroke-width="1.1"/><path d="M7.5 4.3 A3.2 3.2 0 0 1 7.5 10.7 Z" fill="#6a6a6a"/><g fill="#6a6a6a"><circle cx="7.5" cy="1" r="1"/><circle cx="7.5" cy="14" r="1"/><circle cx="1" cy="7.5" r="1"/><circle cx="14" cy="7.5" r="1"/><circle cx="2.8" cy="2.8" r="0.9"/><circle cx="12.2" cy="12.2" r="0.9"/><circle cx="2.8" cy="12.2" r="0.9"/><circle cx="12.2" cy="2.8" r="0.9"/></g></svg>
<div class="t" style="left:241px;top:592.04px;font-size:11px;font-weight:normal;color:#1a1a1a;">Contrast</div>
<svg style="left:224px;top:614px" width="15" height="15" viewBox="0 0 15 15"><rect x="0.5" y="1.5" width="4" height="12" fill="none" stroke="#6a6a6a" stroke-width="1"/><rect x="9" y="1.5" width="5" height="12" fill="#6a6a6a"/><path d="M6.8 0 V15" stroke="#6a6a6a" stroke-width="1"/></svg>
<div class="t" style="left:241px;top:616.04px;font-size:11px;font-weight:normal;color:#1a1a1a;">InvertColors</div>
<div class="t" style="left:221px;top:645.64px;font-size:12px;font-weight:normal;color:#1a1a1a;">Effects</div>
<svg style="left:224px;top:665px" width="15" height="15" viewBox="0 0 15 15"><path d="M7.5 1 L4 14 H11 Z" fill="none" stroke="#6a6a6a" stroke-width="1"/></svg>
<div class="t" style="left:241px;top:667.04px;font-size:11px;font-weight:normal;color:#1a1a1a;">Sharpen</div>
<svg style="left:224px;top:689px" width="15" height="15" viewBox="0 0 15 15"><path d="M7.5 1 Q12 7 12 10 A4.5 4.5 0 0 1 3 10 Q3 7 7.5 1 Z" fill="#6a6a6a"/></svg>
<div class="t" style="left:241px;top:691.04px;font-size:11px;font-weight:normal;color:#1a1a1a;">Blur</div>
<svg style="left:359px;top:202px" width="1192" height="671" viewBox="359 202 1192 671">
<defs>
<linearGradient id="sky" x1="0" y1="202" x2="0" y2="873" gradientUnits="userSpaceOnUse">
<stop offset="0" stop-color="#b3925c"/>
<stop offset="0.05" stop-color="#b5945d"/>
<stop offset="0.153" stop-color="#bb9354"/>
<stop offset="0.288" stop-color="#c38d46"/>
<stop offset="0.459" stop-color="#cd883c"/>
<stop offset="0.6" stop-color="#d17a28"/>
<stop offset="0.69" stop-color="#d4711d"/>
<stop offset="0.75" stop-color="#de6f1a"/>
<stop offset="0.83" stop-color="#ef7414"/>
<stop offset="0.875" stop-color="#fa780e"/>
<stop offset="1" stop-color="#fa780e"/>
</linearGradient>
<linearGradient id="gnd" x1="0" y1="780" x2="0" y2="873" gradientUnits="userSpaceOnUse">
<stop offset="0" stop-color="#1f1a25"/>
<stop offset="0.55" stop-color="#19161f"/>
<stop offset="1" stop-color="#0d0b11"/>
</linearGradient>
<linearGradient id="vigL" x1="359" y1="0" x2="1551" y2="0" gradientUnits="userSpaceOnUse">
<stop offset="0" stop-color="#2a1400" stop-opacity="0.09"/>
<stop offset="0.3" stop-color="#2a1400" stop-opacity="0"/>
</linearGradient>
<linearGradient id="vigR" x1="359" y1="0" x2="1551" y2="0" gradientUnits="userSpaceOnUse">
<stop offset="0.6" stop-color="#2a1400" stop-opacity="0"/>
<stop offset="1" stop-color="#2a1400" stop-opacity="0.1"/>
</linearGradient>
<linearGradient id="fadeV" x1="0" y1="202" x2="0" y2="873" gradientUnits="userSpaceOnUse">
<stop offset="0" stop-color="#fff"/>
<stop offset="0.45" stop-color="#fff"/>
<stop offset="0.72" stop-color="#000"/>
</linearGradient>
<mask id="mL" maskUnits="userSpaceOnUse" x="359" y="202" width="1192" height="671"><rect x="359" y="202" width="1192" height="671" fill="url(#fadeV)"/></mask>
</defs>
<rect x="359" y="202" width="1192" height="671" fill="url(#sky)"/>
<rect x="359" y="202" width="1192" height="671" fill="url(#vigL)" mask="url(#mL)"/>
<rect x="359" y="202" width="1192" height="671" fill="url(#vigR)"/>
<path d="M359 340 Q955.0 330.0 1551 286" fill="none" stroke="#38200c" stroke-width="1.7"/>
<path d="M359 345 Q955.0 335.2 1551 289.5" fill="none" stroke="#38200c" stroke-width="1.7"/>
<path d="M359 349.5 Q955.0 339.5 1551 293.5" fill="none" stroke="#38200c" stroke-width="1.7"/>
<path d="M359 355 Q955.0 345.0 1551 297" fill="none" stroke="#38200c" stroke-width="1.7"/>
<path d="M359 477 Q405.0 474.0 451 467" fill="none" stroke="#38200c" stroke-width="1.05"/>
<path d="M497 466 Q689.0 448.5 881 407" fill="none" stroke="#38200c" stroke-width="1.05"/>
<path d="M359 512 Q422.0 509.5 485 503" fill="none" stroke="#38200c" stroke-width="1.05"/>
<path d="M528 497 Q723.0 489.0 918 457" fill="none" stroke="#38200c" stroke-width="1.05"/>
<path d="M359 541 Q405.5 537.5 452 530" fill="none" stroke="#38200c" stroke-width="1.05"/>
<path d="M497 539 Q689.0 522.5 881 478" fill="none" stroke="#38200c" stroke-width="1.05"/>
<path d="M359 561 Q422.5 553.0 486 541 Q498.0 548.5 510 552" fill="none" stroke="#38200c" stroke-width="1.05"/>
<path d="M359 579 Q422.5 570.5 486 558 Q511.0 556.0 536 550" fill="none" stroke="#38200c" stroke-width="1.05"/>
<path d="M359 596 Q422.5 588.0 486 576 Q511.0 568.0 536 556" fill="none" stroke="#38200c" stroke-width="1.05"/>
<path d="M575 526 Q746.0 566.5 917 535 Q987.0 510.5 1057 482" fill="none" stroke="#38200c" stroke-width="1.05"/>
<path d="M575 553 Q746.0 560.0 917 539 Q1004.5 512.5 1092 482" fill="none" stroke="#38200c" stroke-width="1.05"/>
<path d="M575 561 Q746.0 590.5 917 540 Q1028.5 520.5 1140 497" fill="none" stroke="#38200c" stroke-width="1.05"/>
<path d="M917 522 Q938.5 522.0 960 522 Q1008.5 510.0 1057 494" fill="none" stroke="#38200c" stroke-width="1.05"/>
<path d="M359 640 Q422.0 636.0 485 624 Q522.5 626.0 560 624" fill="none" stroke="#38200c" stroke-width="1.05"/>
<path d="M359 643 Q422.0 641.0 485 631 Q538.0 632.5 591 630" fill="none" stroke="#38200c" stroke-width="1.05"/>
<path d="M359 646 Q422.0 645.5 485 637 Q538.0 637.5 591 634" fill="none" stroke="#38200c" stroke-width="1.05"/>
<path d="M591 630 Q825.5 649.0 1060 556" fill="none" stroke="#38200c" stroke-width="1.05"/>
<path d="M591 632 Q842.5 654.0 1094 556" fill="none" stroke="#38200c" stroke-width="1.05"/>
<path d="M591 634 Q861.5 659.5 1132 557" fill="none" stroke="#38200c" stroke-width="1.05"/>
<path d="M591 636 Q879.0 664.0 1167 556" fill="none" stroke="#38200c" stroke-width="1.05"/>
<path d="M545 652 Q752.5 651.0 960 638 Q1110.0 631.0 1260 612 Q1359.0 606.5 1458 593" fill="none" stroke="#38200c" stroke-width="0.9"/>
<path d="M545 657 Q752.5 656.0 960 643 Q1110.0 636.0 1260 617 Q1359.0 610.5 1458 596" fill="none" stroke="#38200c" stroke-width="0.9"/>
<path d="M930 409 Q1191.5 412.0 1453 359" fill="none" stroke="#38200c" stroke-width="1.05"/>
<path d="M966 445 Q1209.5 451.0 1453 441" fill="none" stroke="#38200c" stroke-width="1.05"/>
<path d="M930 481 Q993.5 483.5 1057 482" fill="none" stroke="#38200c" stroke-width="1.05"/>
<path d="M1165 482 Q1330.5 454.5 1496 411" fill="none" stroke="#38200c" stroke-width="1.05"/>
<path d="M1169 496 Q1360.0 513.5 1551 507" fill="none" stroke="#38200c" stroke-width="1.05"/>
<path d="M1141 499 Q1346.0 520.5 1551 518" fill="none" stroke="#38200c" stroke-width="1.05"/>
<path d="M1115 515 Q1333.0 544.0 1551 545" fill="none" stroke="#38200c" stroke-width="1.05"/>
<path d="M1167 556 Q1312.5 583.5 1458 591" fill="none" stroke="#38200c" stroke-width="1.05"/>
<path d="M1167 559 Q1312.5 585.0 1458 591" fill="none" stroke="#38200c" stroke-width="1.05"/>
<path d="M1167 562 Q1312.5 587.0 1458 592" fill="none" stroke="#38200c" stroke-width="1.05"/>
<path d="M1167 566 Q1312.5 589.0 1458 592" fill="none" stroke="#38200c" stroke-width="1.05"/>
<path d="M1518 588 Q1534.5 589.5 1551 587" fill="none" stroke="#38200c" stroke-width="1.05"/>
<path d="M1518 592 Q1534.5 594.0 1551 592" fill="none" stroke="#38200c" stroke-width="1.05"/>
<path d="M1506 358 Q1528.5 357.5 1551 357" fill="none" stroke="#38200c" stroke-width="1.05"/>
<path d="M1506 442 Q1528.5 441.5 1551 441" fill="none" stroke="#38200c" stroke-width="1.05"/>
<path d="M359 739 Q415.0 740.0 471 737" fill="none" stroke="#38200c" stroke-width="1.05"/>
<path d="M511 739 Q708.0 746.5 905 722" fill="none" stroke="#38200c" stroke-width="1.05"/>
<path d="M947 728 Q1098.5 747.0 1250 762 Q1351.0 767.5 1452 769" fill="none" stroke="#38200c" stroke-width="1.0"/>
<path d="M1546 764 Q1548.5 764.0 1551 764" fill="none" stroke="#38200c" stroke-width="1.05"/>
<path d="M359 786 L375 783 L390 786 L420 785 L440 784 L455 787 L458 796 L485 796 L490 801 L522 801 L527 808 L600 807 L650 810 L680 808 L690 804 L702 806 L740 810 L800 812 L850 813 L875 808 L895 810 L950 808.5 L980 803 L1000 802 L1020 812 L1070 805 L1110 799 L1150 803.7 L1175 801 L1201 796.5 L1242 792 L1257 790.4 L1282 793 L1313 792 L1349 784.6 L1379 778 L1417 768 L1455 759 L1481 757 L1551 754 L1551 873 L359 873 Z" fill="#282233"/>
<path d="M359 786 L375 783 L390 786 L420 785 L440 784 L455 787 L458 796 L485 796 L490 801 L522 801 L527 808 L600 807 L650 810 L680 808 L690 804 L702 806 L740 810 L800 812 L850 813 L875 808 L895 810 L950 808.5 L980 803 L1000 802 L1020 812 L1100 812 L1163 806 L1260 803 L1350 801 L1445 790 L1551 778 L1551 873 L359 873 Z" fill="url(#gnd)"/>
<path d="M485 461 L496 461 L500 873 L487 873 Z" fill="#21120a"/>
<path d="M451 467 L487 473" stroke="#21120a" stroke-width="4.2" stroke-linecap="round"/>
<path d="M496 503 L528 497" stroke="#21120a" stroke-width="4.2" stroke-linecap="round"/>
<path d="M452 530 L487 536" stroke="#21120a" stroke-width="4.2" stroke-linecap="round"/>
<rect x="471" y="735.5" width="40" height="3.5" fill="#21120a"/>
<path d="M538 514 L544.5 514 L543 640 L542 873 L529 873 L534 640 Z" fill="#21120a"/>
<path d="M534.5 518 Q537 512 545 512.5 L551 514 L556 507 L558 508.5 L553 517 Q550 522 544 523 L537 522 Z" fill="#21120a"/>
<path d="M508 556.5 L513 553 Q516 545 523 544 L528 545 L532 540 L534 541 L530 549 L536 551 L536 552.5 L527 552 Q522 554 514 557 Z" fill="#21120a"/>
<path d="M544 549.5 L553 549.5 L549 543 L551 541.5 L557 548 Q562 546 567 548 L575 555 L574 558 L566 556 Q560 556 556 552 L544 552 Z" fill="#21120a"/>
<path d="M495 531 Q545.0 529.5 595 528" fill="none" stroke="#38200c" stroke-width="1.05"/>
<path d="M550 518 Q562.5 524.0 575 526 Q585.0 527.5 595 529" fill="none" stroke="#38200c" stroke-width="1.05"/>
<path d="M575 557 Q585.0 559.0 595 561" fill="none" stroke="#38200c" stroke-width="1.05"/>
<path d="M535 510 Q531 512 533 540 L531 575 L528 640 L522 800" fill="none" stroke="#21120a" stroke-width="0.9"/>
<rect x="497" y="633.5" width="95" height="3.5" fill="#21120a"/>
<rect x="518.5" y="627" width="3" height="7" fill="#21120a"/>
<rect x="556.5" y="627" width="3" height="7" fill="#21120a"/>
<rect x="586.5" y="627" width="3" height="7" fill="#21120a"/>
<path d="M513 637 L537 655 L560 637" fill="none" stroke="#21120a" stroke-width="1.5"/>
<path d="M920 406 L930 406 L931 873 L917 873 Z" fill="#21120a"/>
<path d="M881 407 L919 415" stroke="#21120a" stroke-width="4.2" stroke-linecap="round"/>
<path d="M930 451 L966 445" stroke="#21120a" stroke-width="4.2" stroke-linecap="round"/>
<path d="M881 478 L919 484" stroke="#21120a" stroke-width="4.2" stroke-linecap="round"/>
<rect x="905" y="717.5" width="42" height="3.5" fill="#21120a"/>
<path d="M1107 490 L1114.5 490 L1123 873 L1113 873 Z" fill="#21120a"/>
<rect x="1054.5" y="494.5" width="115" height="4" fill="#21120a"/>
<rect x="1056" y="566" width="115" height="4" fill="#21120a"/>
<rect x="1056.5" y="480" width="3.5" height="15" fill="#21120a"/>
<rect x="1091.5" y="480" width="3.5" height="15" fill="#21120a"/>
<rect x="1164.5" y="480" width="3.5" height="15" fill="#21120a"/>
<rect x="1058.5" y="555" width="3.5" height="12" fill="#21120a"/>
<rect x="1092.5" y="555" width="3.5" height="12" fill="#21120a"/>
<rect x="1130.5" y="555" width="3.5" height="12" fill="#21120a"/>
<rect x="1165.5" y="555" width="3.5" height="12" fill="#21120a"/>
<path d="M1084 498 L1108 514 M1141 498 L1115 514 M1085 570 L1109 585 M1141 570 L1116 585" fill="none" stroke="#21120a" stroke-width="1.5"/>
<path d="M1496.5 356 L1506 356 L1509.5 873 L1495.5 873 Z" fill="#21120a"/>
<path d="M1453 359.5 L1497 367" stroke="#21120a" stroke-width="4.2" stroke-linecap="round"/>
<path d="M1506 406 L1549 401" stroke="#21120a" stroke-width="4.2" stroke-linecap="round"/>
<path d="M1453 441.5 L1497 449.5" stroke="#21120a" stroke-width="4.2" stroke-linecap="round"/>
<rect x="1458" y="588" width="60" height="3.5" fill="#21120a"/>
<rect x="1471" y="596.5" width="48" height="3.5" fill="#21120a"/>
<path d="M1481 600 L1496 615" stroke="#21120a" stroke-width="1"/>
<rect x="1452" y="762" width="94" height="4" fill="#231a22"/>
<path d="M381.5 748 L381.5 748.0 L382.0 750.5 L382.5 753.0 L382.8 755.5 L383.4 758.0 L383.0 760.5 L383.9 763.0 L385.1 765.5 L384.9 768.0 L385.0 770.5 L385.9 773.0 L385.4 775.5 L384.9 778.0 L385.8 780.5 L386.1 783.0 L385.7 785.5 L386.5 788.0 L387.3 790.5 L386.6 793.0 L386.4 795.5 L386.9 798.0 L386.2 800.5 L385.8 803.0 L386.8 805.5 L387.1 808.0 L386.8 810.5 L387.6 813.0 L388.0 815.5 L387.0 818.0 L386.9 820.5 L387.4 823.0 L386.8 825.5 L386.7 828.0 L387.9 830.5 L388.2 833.0 L387.7 835.5 L388.4 838.0 L388.5 840.5 L387.4 843.0 L387.5 845.5 L388.2 848.0 L387.7 850.5 L387.9 853.0 L389.2 855.5 L389.1 858.0 L388.5 860.5 L389.1 863.0 L388.9 865.5 L388.0 868.0 L388.4 870.5 L389.2 873.0 L373.9 873.0 L373.5 870.5 L373.7 868.0 L374.7 865.5 L375.3 863.0 L374.9 860.5 L374.3 858.0 L374.5 855.5 L374.9 853.0 L374.6 850.5 L374.0 848.0 L374.1 845.5 L375.1 843.0 L375.8 840.5 L375.6 838.0 L375.3 835.5 L375.6 833.0 L376.0 830.5 L375.7 828.0 L374.9 825.5 L374.7 823.0 L375.5 820.5 L376.1 818.0 L375.9 815.5 L375.8 813.0 L376.4 810.5 L377.0 808.0 L376.8 805.5 L376.0 803.0 L375.7 800.5 L376.2 798.0 L376.5 795.5 L376.2 793.0 L376.1 790.5 L376.8 788.0 L377.7 785.5 L377.7 783.0 L377.0 780.5 L377.0 778.0 L377.6 775.5 L377.9 773.0 L377.5 770.5 L377.4 768.0 L378.3 765.5 L379.4 763.0 L379.8 760.5 L379.6 758.0 L380.1 755.5 L380.5 753.0 L381.0 750.5 L381.5 748.0 Z" fill="#140909"/>
<path d="M433 697 L433.0 697.0 L434.0 700.5 L434.9 704.0 L436.3 707.6 L437.2 711.1 L438.3 714.6 L440.2 718.1 L440.7 721.6 L440.0 725.2 L440.7 728.7 L441.3 732.2 L441.0 735.7 L441.9 739.2 L443.3 742.8 L443.3 746.3 L443.5 749.8 L444.4 753.3 L444.2 756.8 L443.7 760.4 L444.7 763.9 L445.4 767.4 L445.2 770.9 L446.2 774.4 L447.2 778.0 L446.7 781.5 L446.6 785.0 L447.4 788.5 L446.9 792.0 L446.5 795.6 L447.7 799.1 L448.3 802.6 L448.1 806.1 L449.0 809.6 L449.7 813.2 L449.0 816.7 L448.9 820.2 L449.6 823.7 L449.1 827.2 L449.0 830.8 L450.3 834.3 L450.7 837.8 L450.4 841.3 L451.1 844.8 L451.4 848.4 L450.5 851.9 L450.5 855.4 L451.3 858.9 L451.0 862.4 L451.2 866.0 L452.5 869.5 L452.7 873.0 L421.3 873.0 L421.9 869.5 L422.0 866.0 L421.7 862.4 L421.7 858.9 L422.5 855.4 L423.1 851.9 L422.7 848.4 L421.9 844.8 L421.9 841.3 L422.2 837.8 L422.1 834.3 L421.5 830.8 L421.5 827.2 L422.3 823.7 L423.1 820.2 L422.9 816.7 L422.5 813.2 L422.7 809.6 L423.1 806.1 L423.0 802.6 L422.2 799.1 L422.0 795.6 L422.8 792.0 L423.5 788.5 L423.5 785.0 L423.3 781.5 L423.7 778.0 L424.4 774.4 L424.2 770.9 L423.5 767.4 L423.3 763.9 L423.9 760.4 L424.6 756.8 L424.6 753.3 L424.5 749.8 L425.3 746.3 L426.4 742.8 L426.6 739.2 L426.0 735.7 L425.8 732.2 L426.3 728.7 L426.7 725.2 L426.5 721.6 L426.7 718.1 L428.2 714.6 L430.1 711.1 L431.3 707.6 L431.4 704.0 L432.2 700.5 L433.0 697.0 Z" fill="#140909"/>
<path d="M751 701 L751.0 701.0 L751.7 704.4 L752.4 707.9 L754.0 711.3 L753.7 714.8 L754.4 718.2 L755.3 721.6 L755.1 725.1 L755.8 728.5 L757.4 732.0 L757.5 735.4 L757.5 738.8 L758.5 742.3 L758.5 745.7 L757.7 749.2 L758.1 752.6 L758.6 756.0 L758.2 759.5 L758.7 762.9 L759.8 766.4 L759.6 769.8 L759.3 773.2 L760.0 776.7 L759.6 780.1 L758.7 783.6 L759.3 787.0 L759.8 790.4 L759.3 793.9 L760.0 797.3 L761.0 800.8 L760.4 804.2 L760.0 807.6 L760.5 811.1 L760.0 814.5 L759.2 818.0 L760.1 821.4 L760.6 824.8 L760.2 828.3 L760.8 831.7 L761.4 835.2 L760.6 838.6 L760.1 842.0 L760.7 845.5 L760.2 848.9 L759.8 852.4 L760.9 855.8 L761.4 859.2 L760.9 862.7 L761.4 866.1 L761.7 869.6 L760.6 873.0 L741.2 873.0 L740.4 869.6 L740.3 866.1 L740.9 862.7 L741.3 859.2 L741.0 855.8 L741.0 852.4 L741.7 848.9 L742.4 845.5 L742.0 842.0 L741.2 838.6 L741.0 835.2 L741.5 831.7 L741.6 828.3 L741.1 824.8 L741.0 821.4 L741.8 818.0 L742.6 814.5 L742.5 811.1 L741.9 807.6 L741.9 804.2 L742.3 800.8 L742.2 797.3 L741.5 793.9 L741.3 790.4 L742.0 787.0 L742.9 783.6 L742.9 780.1 L742.6 776.7 L742.9 773.2 L743.5 769.8 L743.4 766.4 L742.6 762.9 L742.2 759.5 L742.8 756.0 L743.6 752.6 L743.8 749.2 L743.7 745.7 L744.3 742.3 L745.3 738.8 L745.6 735.4 L745.0 732.0 L745.0 728.5 L745.9 725.1 L746.8 721.6 L747.2 718.2 L747.4 714.8 L748.5 711.3 L749.6 707.9 L750.3 704.4 L751.0 701.0 Z" fill="#140909"/>
<path d="M776.5 675 L776.5 675.0 L777.3 679.0 L778.1 682.9 L778.5 686.9 L778.6 690.8 L780.1 694.8 L780.7 698.8 L780.9 702.7 L782.4 706.7 L783.3 710.6 L782.8 714.6 L783.1 718.6 L783.6 722.5 L782.9 726.5 L783.1 730.4 L784.3 734.4 L784.5 738.4 L784.5 742.3 L785.5 746.3 L785.6 750.2 L784.7 754.2 L785.0 758.2 L785.5 762.1 L784.9 766.1 L785.2 770.0 L786.4 774.0 L786.3 778.0 L785.9 781.9 L786.6 785.9 L786.3 789.8 L785.3 793.8 L785.7 797.8 L786.3 801.7 L785.8 805.7 L786.3 809.6 L787.4 813.6 L787.0 817.6 L786.5 821.5 L787.0 825.5 L786.6 829.4 L785.8 833.4 L786.6 837.4 L787.2 841.3 L786.8 845.3 L787.4 849.2 L788.1 853.2 L787.4 857.2 L786.9 861.1 L787.4 865.1 L787.1 869.0 L786.6 873.0 L765.8 873.0 L766.2 869.0 L765.9 865.1 L765.0 861.1 L764.9 857.2 L765.6 853.2 L766.1 849.2 L766.0 845.3 L765.9 841.3 L766.4 837.4 L767.1 833.4 L766.9 829.4 L766.0 825.5 L765.7 821.5 L766.2 817.6 L766.5 813.6 L766.2 809.6 L766.1 805.7 L766.8 801.7 L767.7 797.8 L767.7 793.8 L767.0 789.8 L766.8 785.9 L767.2 781.9 L767.3 778.0 L766.7 774.0 L766.4 770.0 L767.0 766.1 L768.0 762.1 L768.2 758.2 L767.9 754.2 L768.1 750.2 L768.8 746.3 L769.0 742.3 L768.4 738.4 L768.0 734.4 L768.6 730.4 L769.5 726.5 L769.7 722.5 L769.6 718.6 L770.1 714.6 L771.4 710.6 L772.1 706.7 L771.8 702.7 L771.7 698.8 L772.4 694.8 L773.4 690.8 L773.8 686.9 L774.9 682.9 L775.7 679.0 L776.5 675.0 Z" fill="#140909"/>
<path d="M793 697 L793.0 697.0 L793.9 700.5 L794.8 704.0 L795.1 707.6 L796.6 711.1 L797.9 714.6 L797.7 718.1 L798.2 721.6 L799.2 725.2 L798.8 728.7 L798.8 732.2 L800.1 735.7 L800.5 739.2 L800.3 742.8 L801.3 746.3 L801.8 749.8 L801.0 753.3 L801.0 756.8 L801.5 760.4 L800.7 763.9 L800.6 767.4 L801.8 770.9 L802.0 774.4 L801.7 778.0 L802.6 781.5 L802.8 785.0 L801.8 788.5 L801.8 792.0 L802.4 795.6 L801.8 799.1 L802.0 802.6 L803.3 806.1 L803.3 809.6 L802.9 813.2 L803.6 816.7 L803.5 820.2 L802.4 823.7 L802.8 827.2 L803.4 830.8 L803.1 834.3 L803.5 837.8 L804.7 841.3 L804.4 844.8 L803.9 848.4 L804.5 851.9 L804.3 855.4 L803.5 858.9 L804.2 862.4 L805.0 866.0 L804.7 869.5 L805.2 873.0 L785.5 873.0 L785.1 869.5 L785.2 866.0 L785.7 862.4 L785.4 858.9 L784.6 855.4 L784.4 851.9 L785.1 848.4 L785.8 844.8 L785.7 841.3 L785.5 837.8 L785.9 834.3 L786.5 830.8 L786.3 827.2 L785.4 823.7 L784.9 820.2 L785.4 816.7 L785.8 813.2 L785.5 809.6 L785.3 806.1 L785.9 802.6 L786.7 799.1 L786.7 795.6 L786.0 792.0 L785.6 788.5 L785.9 785.0 L786.0 781.5 L785.5 778.0 L785.2 774.4 L785.7 770.9 L786.7 767.4 L786.9 763.9 L786.4 760.4 L786.2 756.8 L786.6 753.3 L786.7 749.8 L786.0 746.3 L785.4 742.8 L785.8 739.2 L786.8 735.7 L787.4 732.2 L787.5 728.7 L788.0 725.2 L789.1 721.6 L789.8 718.1 L789.5 714.6 L789.2 711.1 L789.9 707.6 L791.3 704.0 L792.2 700.5 L793.0 697.0 Z" fill="#140909"/>
<path d="M791 702 L797 700 L801 705 L806 704 L805 709 L811 712 L809 717 L812 721 L806 724 L807 729 L800 732 L795 726 Z" fill="#140909"/>
<path d="M827 670 L827.0 670.0 L827.7 674.1 L828.5 678.1 L829.3 682.2 L830.6 686.2 L830.6 690.3 L830.2 694.4 L831.2 698.4 L831.9 702.5 L831.8 706.5 L833.0 710.6 L834.1 714.7 L833.8 718.7 L833.8 722.8 L834.6 726.8 L834.0 730.9 L833.5 735.0 L834.6 739.0 L835.0 743.1 L834.8 747.1 L835.9 751.2 L836.7 755.3 L836.0 759.3 L835.9 763.4 L836.4 767.4 L835.7 771.5 L835.4 775.6 L836.5 779.6 L836.8 783.7 L836.4 787.7 L837.2 791.8 L837.5 795.9 L836.5 799.9 L836.4 804.0 L837.0 808.0 L836.4 812.1 L836.4 816.2 L837.7 820.2 L837.8 824.3 L837.3 828.3 L837.9 832.4 L837.9 836.5 L836.8 840.5 L836.9 844.6 L837.6 848.6 L837.3 852.7 L837.5 856.8 L838.6 860.8 L838.5 864.9 L837.8 868.9 L838.3 873.0 L816.0 873.0 L816.9 868.9 L816.8 864.9 L816.2 860.8 L816.2 856.8 L816.6 852.7 L816.5 848.6 L815.8 844.6 L815.5 840.5 L816.2 836.5 L817.1 832.4 L817.1 828.3 L816.8 824.3 L817.0 820.2 L817.6 816.2 L817.5 812.1 L816.7 808.0 L816.2 804.0 L816.7 799.9 L817.3 795.9 L817.3 791.8 L817.1 787.7 L817.6 783.7 L818.4 779.6 L818.6 775.6 L817.8 771.5 L817.4 767.4 L817.7 763.4 L818.1 759.3 L817.9 755.3 L817.7 751.2 L818.4 747.1 L819.6 743.1 L820.1 739.0 L819.8 735.0 L819.6 730.9 L820.2 726.8 L820.6 722.8 L820.2 718.7 L819.8 714.7 L820.3 710.6 L821.6 706.5 L822.5 702.5 L822.7 698.4 L823.1 694.4 L824.2 690.3 L825.0 686.2 L824.9 682.2 L825.5 678.1 L826.3 674.1 L827.0 670.0 Z" fill="#140909"/>
<path d="M893 711 L893.0 711.0 L893.8 714.2 L894.6 717.5 L895.3 720.7 L896.1 724.0 L895.8 727.2 L896.5 730.4 L898.0 733.7 L898.2 736.9 L898.5 740.2 L899.7 743.4 L899.7 746.6 L899.1 749.9 L899.9 753.1 L900.4 756.4 L900.0 759.6 L900.9 762.8 L902.1 766.1 L901.8 769.3 L901.8 772.6 L902.6 775.8 L902.2 779.0 L901.6 782.3 L902.3 785.5 L902.8 788.8 L902.4 792.0 L903.1 795.2 L903.9 798.5 L903.2 801.7 L902.9 805.0 L903.4 808.2 L902.8 811.4 L902.4 814.7 L903.4 817.9 L903.9 821.2 L903.5 824.4 L904.2 827.6 L904.7 830.9 L903.7 834.1 L903.5 837.4 L904.1 840.6 L903.6 843.8 L903.5 847.1 L904.7 850.3 L905.0 853.6 L904.5 856.8 L905.1 860.0 L905.3 863.3 L904.2 866.5 L904.2 869.8 L905.0 873.0 L880.6 873.0 L880.5 869.8 L881.2 866.5 L882.1 863.3 L882.1 860.0 L881.5 856.8 L881.4 853.6 L881.8 850.3 L881.9 847.1 L881.3 843.8 L881.0 840.6 L881.7 837.4 L882.6 834.1 L882.8 830.9 L882.4 827.6 L882.5 824.4 L883.1 821.2 L883.1 817.9 L882.3 814.7 L881.8 811.4 L882.2 808.2 L883.0 805.0 L883.1 801.7 L882.9 798.5 L883.2 795.2 L884.0 792.0 L884.2 788.8 L883.5 785.5 L882.9 782.3 L883.2 779.0 L883.9 775.8 L884.0 772.6 L883.8 769.3 L884.4 766.1 L885.6 762.8 L886.2 759.6 L885.9 756.4 L885.6 753.1 L886.1 749.9 L886.8 746.6 L886.8 743.4 L886.6 740.2 L887.3 736.9 L888.7 733.7 L889.6 730.4 L889.7 727.2 L889.9 724.0 L890.9 720.7 L891.4 717.5 L892.2 714.2 L893.0 711.0 Z" fill="#140909"/>
<path d="M1100 744 L1100.0 744.0 L1100.6 746.6 L1101.3 749.2 L1102.0 751.7 L1102.4 754.3 L1102.7 756.9 L1104.1 759.5 L1104.5 762.1 L1104.0 764.6 L1104.5 767.2 L1105.1 769.8 L1104.4 772.4 L1104.6 775.0 L1105.8 777.5 L1105.8 780.1 L1105.6 782.7 L1106.5 785.3 L1106.2 787.9 L1105.3 790.4 L1105.7 793.0 L1106.1 795.6 L1105.6 798.2 L1106.1 800.8 L1107.3 803.3 L1106.9 805.9 L1106.6 808.5 L1107.2 811.1 L1106.8 813.7 L1105.9 816.2 L1106.5 818.8 L1107.0 821.4 L1106.6 824.0 L1107.2 826.6 L1108.1 829.1 L1107.5 831.7 L1107.0 834.3 L1107.6 836.9 L1107.1 839.5 L1106.5 842.0 L1107.4 844.6 L1107.9 847.2 L1107.4 849.8 L1107.9 852.4 L1108.4 854.9 L1107.4 857.5 L1107.0 860.1 L1107.5 862.7 L1107.1 865.3 L1106.7 867.8 L1107.8 870.4 L1108.1 873.0 L1092.1 873.0 L1092.5 870.4 L1092.2 867.8 L1092.0 865.3 L1092.5 862.7 L1093.4 860.1 L1093.3 857.5 L1092.6 854.9 L1092.2 852.4 L1092.5 849.8 L1092.6 847.2 L1092.0 844.6 L1091.7 842.0 L1092.2 839.5 L1093.2 836.9 L1093.5 834.3 L1093.0 831.7 L1092.9 829.1 L1093.3 826.6 L1093.4 824.0 L1092.8 821.4 L1092.2 818.8 L1092.5 816.2 L1093.4 813.7 L1093.6 811.1 L1093.3 808.5 L1093.5 805.9 L1094.2 803.3 L1094.5 800.8 L1093.8 798.2 L1093.2 795.6 L1093.4 793.0 L1094.0 790.4 L1094.1 787.9 L1093.8 785.3 L1094.1 782.7 L1095.1 780.1 L1095.6 777.5 L1095.2 775.0 L1094.6 772.4 L1094.7 769.8 L1095.4 767.2 L1095.6 764.6 L1095.4 762.1 L1096.0 759.5 L1097.3 756.9 L1098.4 754.3 L1098.5 751.7 L1098.7 749.2 L1099.4 746.6 L1100.0 744.0 Z" fill="#140909"/>
<path d="M1330 626 L1330.0 626.0 L1331.3 630.9 L1332.5 635.9 L1334.4 640.8 L1334.5 645.8 L1335.4 650.7 L1336.7 655.6 L1336.6 660.6 L1336.7 665.5 L1338.0 670.5 L1338.4 675.4 L1338.5 680.3 L1339.8 685.3 L1340.4 690.2 L1339.7 695.2 L1340.1 700.1 L1340.8 705.0 L1340.4 710.0 L1340.8 714.9 L1342.3 719.9 L1342.5 724.8 L1342.4 729.7 L1343.4 734.7 L1343.5 739.6 L1342.6 744.6 L1343.0 749.5 L1343.7 754.4 L1343.4 759.4 L1343.9 764.3 L1345.3 769.3 L1345.3 774.2 L1345.1 779.1 L1345.9 784.1 L1345.7 789.0 L1345.0 794.0 L1345.7 798.9 L1346.5 803.8 L1346.3 808.8 L1347.0 813.7 L1348.1 818.7 L1347.8 823.6 L1347.4 828.5 L1348.2 833.5 L1348.0 838.4 L1347.5 843.4 L1348.5 848.3 L1349.4 853.2 L1349.1 858.2 L1349.8 863.1 L1350.7 868.1 L1350.0 873.0 L1311.7 873.0 L1311.3 868.1 L1312.0 863.1 L1312.7 858.2 L1312.8 853.2 L1312.7 848.3 L1313.3 843.4 L1314.4 838.4 L1314.6 833.5 L1314.0 828.5 L1313.7 823.6 L1314.2 818.7 L1314.7 813.7 L1314.5 808.8 L1314.3 803.8 L1314.9 798.9 L1316.1 794.0 L1316.5 789.0 L1316.2 784.1 L1316.1 779.1 L1316.6 774.2 L1317.0 769.3 L1316.6 764.3 L1316.1 759.4 L1316.6 754.4 L1317.7 749.5 L1318.2 744.6 L1318.1 739.6 L1318.2 734.7 L1319.0 729.7 L1319.4 724.8 L1319.0 719.9 L1318.5 714.9 L1318.9 710.0 L1319.8 705.0 L1320.3 700.1 L1320.3 695.2 L1320.8 690.2 L1321.9 685.3 L1322.7 680.3 L1322.5 675.4 L1322.1 670.5 L1322.3 665.5 L1323.1 660.6 L1323.8 655.6 L1324.2 650.7 L1325.1 645.8 L1326.9 640.8 L1327.6 635.9 L1328.8 630.9 L1330.0 626.0 Z" fill="#140909"/>
</svg>
<div class="a" style="left:1320px;top:975px;width:135px;height:2px;background:#9a9a9a"></div>
<div class="a" style="left:1320px;top:975px;width:25px;height:2px;background:#1b8fb3"></div>
<div class="a" style="left:1343.5px;top:966px;width:8.5px;height:20px;background:#1793b9;border-radius:4px"></div>
<div class="a" style="left:1463px;top:965px;width:73px;height:22px;background:#fff;border:1px solid #cfcfcf"></div>
<div class="a" style="left:1515px;top:965px;width:21px;height:22px;background:#e2e2e2;border:1px solid #cfcfcf"></div>
<div class="t" style="left:1465px;top:970.04px;font-size:11px;font-weight:normal;color:#555;">100 %</div>
<svg style="left:1520px;top:972px" width="12" height="8"><path d="M1 1 L6 6 L11 1" fill="none" stroke="#333" stroke-width="1.5"/></svg>
<div class="a" style="left:1px;top:1010px;width:1587px;height:25px;background:linear-gradient(#fbfbfb,#f3f3f3);border-radius:0 0 8px 8px"></div>
<svg style="left:1561px;top:1015px" width="16" height="16" viewBox="0 0 16 16"><path d="M6.5 0 H9.5 L10 2.3 L12 1.2 L14.5 3.5 L13.5 5.8 L16 6.5 V9.5 L13.7 10 L14.8 12 L12.5 14.5 L10.2 13.5 L9.5 16 H6.5 L6 13.7 L4 14.8 L1.5 12.5 L2.5 10.2 L0 9.5 V6.5 L2.3 6 L1.2 4 L3.5 1.5 L5.8 2.5 Z" fill="#7a7a7a"/><circle cx="8" cy="8" r="3" fill="#f5f5f5"/></svg>
<svg style="left:1579px;top:1022px" width="7" height="4"><path d="M0 0 H6.5 L3.25 3.5 Z" fill="#111"/></svg>
</body></html>
